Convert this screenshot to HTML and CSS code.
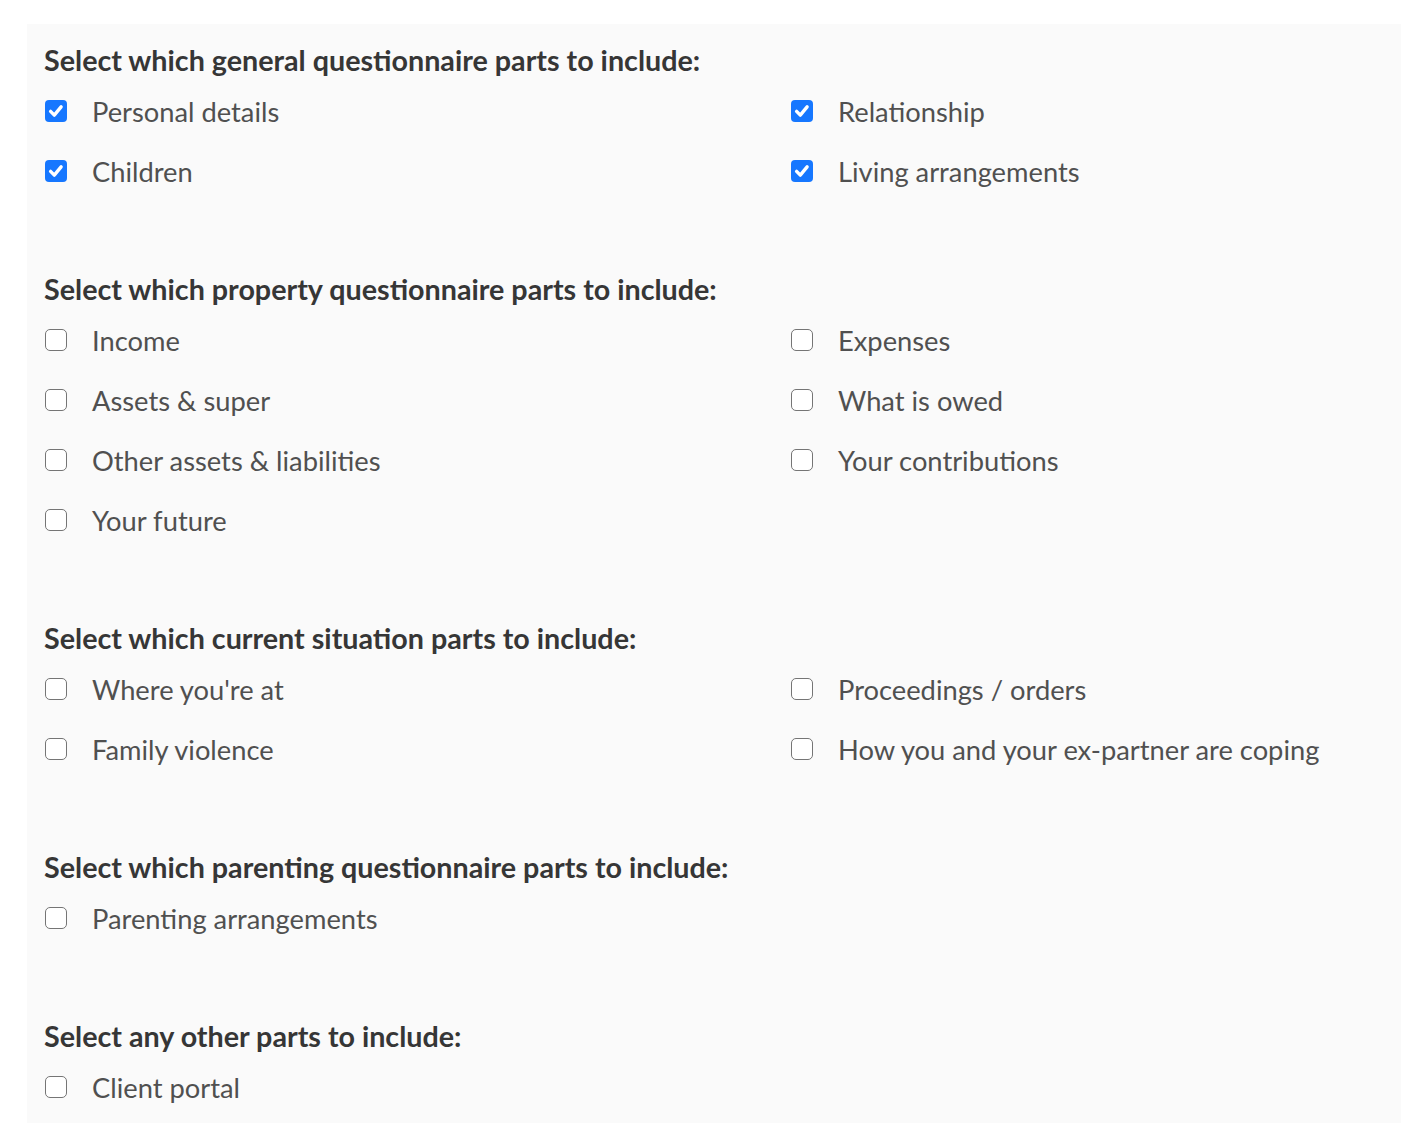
FILE: index.html
```html
<!DOCTYPE html>
<html lang="en">
<head>
    <meta charset="UTF-8">
    <meta name="viewport" content="width=device-width, initial-scale=1.0">
    <title>Questionnaire parts</title>
    <link rel="stylesheet" href="styles.css">
</head>
<body>

<div class="panel">

    <section class="part-group">
        <h2>Select which general questionnaire parts to include:</h2>
        <div class="options">
            <label class="option"><span class="box checked"><svg viewBox="0 0 22 22"><path d="M5.6 11.4l3.7 3.7 6.8-8.2"/></svg></span>Personal details</label>
            <label class="option"><span class="box checked"><svg viewBox="0 0 22 22"><path d="M5.6 11.4l3.7 3.7 6.8-8.2"/></svg></span>Relationship</label>
            <label class="option"><span class="box checked"><svg viewBox="0 0 22 22"><path d="M5.6 11.4l3.7 3.7 6.8-8.2"/></svg></span>Children</label>
            <label class="option"><span class="box checked"><svg viewBox="0 0 22 22"><path d="M5.6 11.4l3.7 3.7 6.8-8.2"/></svg></span>Living arrangements</label>
        </div>
    </section>

    <section class="part-group">
        <h2>Select which property questionnaire parts to include:</h2>
        <div class="options">
            <label class="option"><span class="box"></span>Income</label>
            <label class="option"><span class="box"></span>Expenses</label>
            <label class="option"><span class="box"></span>Assets &amp; super</label>
            <label class="option"><span class="box"></span>What is owed</label>
            <label class="option"><span class="box"></span>Other assets &amp; liabilities</label>
            <label class="option"><span class="box"></span>Your contributions</label>
            <label class="option"><span class="box"></span>Your future</label>
        </div>
    </section>

    <section class="part-group">
        <h2>Select which current situation parts to include:</h2>
        <div class="options">
            <label class="option"><span class="box"></span>Where you're at</label>
            <label class="option"><span class="box"></span>Proceedings / orders</label>
            <label class="option"><span class="box"></span>Family violence</label>
            <label class="option"><span class="box"></span>How you and your ex-partner are coping</label>
        </div>
    </section>

    <section class="part-group">
        <h2>Select which parenting questionnaire parts to include:</h2>
        <div class="options">
            <label class="option"><span class="box"></span>Parenting arrangements</label>
        </div>
    </section>

    <section class="part-group">
        <h2>Select any other parts to include:</h2>
        <div class="options">
            <label class="option"><span class="box"></span>Client portal</label>
        </div>
    </section>

</div>

</body>
</html>
```

FILE: styles.css
```css
body {
    margin: 0;
    padding: 24px 0 0 27px;
    background: #fff;
    font-family: Lato, "Open Sans", sans-serif;
    overflow: hidden;
}
.panel {
    background: #fafafa;
    padding: 18px 0 6px 17px;
}
.part-group {
    margin-bottom: 70px;
}
.part-group:last-child {
    margin-bottom: 0;
}
h2 {
    margin: 0 0 3px;
    font-size: 28.7px;
    line-height: 36px;
    font-weight: bold;
    color: #363636;
}
.options {
    display: grid;
    grid-template-columns: 746px 1fr;
}
.option {
    display: flex;
    align-items: center;
    height: 60px;
    font-size: 27.3px;
    color: #505050;
}
.box {
    box-sizing: border-box;
    width: 22px;
    height: 22px;
    margin: 0 25px 0 1px;
    border: 1.5px solid #757575;
    border-radius: 5px;
    background: #fff;
    flex-shrink: 0;
}
.box.checked {
    border: none;
    border-radius: 4px;
    background: #1677ff;
}
.box svg {
    display: block;
    width: 22px;
    height: 22px;
    fill: none;
    stroke: #fff;
    stroke-width: 3.4;
    stroke-linecap: round;
    stroke-linejoin: round;
}
```
